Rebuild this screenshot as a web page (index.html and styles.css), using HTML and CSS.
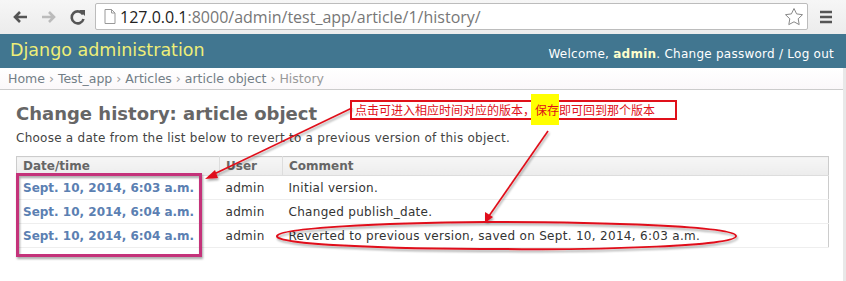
FILE: index.html
```html
<!DOCTYPE html>
<html lang="en">

<head>
  <meta charset="UTF-8" />
  <title>Change history: article object</title>
  <link rel="stylesheet" href="styles.css">
</head>

<body>
  <!-- 浏览器工具栏 -->
  <div class="browser-bar">
    <div class="nav-btns">
      <svg width="18" height="16" viewBox="0 0 18 16"><path d="M16 8H4M9 3L4 8l5 5" fill="none" stroke="#555" stroke-width="2.6" /></svg>
      <svg width="18" height="16" viewBox="0 0 18 16"><path d="M2 8h12M9 3l5 5-5 5" fill="none" stroke="#bbb" stroke-width="2.6" /></svg>
      <svg width="18" height="18" viewBox="0 0 18 18"><path d="M14 6.5A6 6 0 1 0 14.5 11" fill="none" stroke="#555" stroke-width="2.6" /><path d="M10 2h6v6z" fill="#555" /></svg>
    </div>
    <div class="omnibox">
      <svg width="12" height="15" viewBox="0 0 12 15"><path d="M1 .5h6.5l3.5 3.5v10.5H1z M7.5 .5V4h3.5" fill="#fff" stroke="#999" /></svg>
      <span class="host">127.0.0.1</span><span class="path">:8000/admin/test_app/article/1/history/</span>
      <svg class="star" width="20" height="20" viewBox="0 0 20 20"><path d="M10 1.5l2.6 5.4 5.9.8-4.3 4.1 1 5.8-5.2-2.8-5.2 2.8 1-5.8-4.3-4.1 5.9-.8z" fill="none" stroke="#888" /></svg>
    </div>
    <svg class="menu" width="12" height="14" viewBox="0 0 12 14"><path d="M0 2h12M0 7h12M0 12h12" stroke="#555" stroke-width="2.4" /></svg>
  </div>

  <div id="header">
    <h1 class="branding">Django administration</h1>
    <div class="user-tools">Welcome, <strong>admin</strong>. <a href="#">Change password</a> / <a href="#">Log out</a></div>
  </div>

  <div class="page">
    <div class="breadcrumbs">
      <a href="#">Home</a> › <a href="#">Test_app</a> › <a href="#">Articles</a> › <a href="#">article object</a> › History
    </div>

    <div id="content">
      <h1>Change history: article object</h1>
      <p>Choose a date from the list below to revert to a previous version of this object.</p>
      <table class="history">
        <thead>
          <tr>
            <th class="col-date">Date/time</th>
            <th class="col-user">User</th>
            <th>Comment</th>
          </tr>
        </thead>
        <tbody>
          <tr>
            <th><a href="#">Sept. 10, 2014, 6:03 a.m.</a></th>
            <td>admin</td>
            <td>Initial version.</td>
          </tr>
          <tr>
            <th><a href="#">Sept. 10, 2014, 6:04 a.m.</a></th>
            <td>admin</td>
            <td>Changed publish_date.</td>
          </tr>
          <tr>
            <th><a href="#">Sept. 10, 2014, 6:04 a.m.</a></th>
            <td>admin</td>
            <td>Reverted to previous version, saved on Sept. 10, 2014, 6:03 a.m.</td>
          </tr>
        </tbody>
      </table>
    </div>
  </div>

  <!-- 截图上的标注 -->
  <svg class="marks" width="846" height="281" viewBox="0 0 846 281">
    <defs>
      <filter id="shadow" x="-10%" y="-10%" width="120%" height="130%">
        <feDropShadow dx="1" dy="2" stdDeviation="1.2" flood-color="#000" flood-opacity="0.35" />
      </filter>
    </defs>
    <rect x="17.5" y="174.5" width="183" height="81" fill="none" stroke="#c4307a" stroke-width="3" filter="url(#shadow)" />
    <g stroke="#e0101a" stroke-width="1.6" fill="#e0101a" filter="url(#shadow)">
      <line x1="352" y1="108" x2="212" y2="175" />
      <polygon points="205,179 215,170 218,178" stroke="none" />
      <line x1="548" y1="131" x2="489" y2="216" />
      <polygon points="485,223 485,212 493,217" stroke="none" />
      <path d="M486 222 C 600 222, 735 226, 736 236 C 737 246, 600 250, 505 249 C 380 249, 275 244, 277 236 C 279 228, 380 223, 486 222 Z" fill="none" stroke-width="2" />
    </g>
  </svg>
  <div class="note">点击可进入相应时间对应的版本，<mark>保存</mark>即可回到那个版本</div>
</body>

</html>
```

FILE: styles.css
```css
body {
  margin: 0;
  width: 846px;
  height: 281px;
  overflow: hidden;
  position: relative;
  background: #fff;
  color: #333;
  font-family: "DejaVu Sans", Verdana, sans-serif;
  font-size: 12px;
}

a {
  text-decoration: none;
}

/* 浏览器工具栏 */
.browser-bar {
  height: 34px;
  display: flex;
  align-items: center;
  background: linear-gradient(#f6f6f6, #ececec);
  box-sizing: border-box;
  padding-bottom: 1px;
}

.nav-btns {
  display: flex;
  align-items: center;
  gap: 11px;
  padding-left: 11px;
  width: 84px;
}

.omnibox {
  width: 713px;
  height: 27px;
  box-sizing: border-box;
  display: flex;
  align-items: center;
  background: #fff;
  border: 1px solid #bcbcbc;
  border-radius: 2px;
  padding-left: 8px;
  font-family: "Open Sans", "Liberation Sans", sans-serif;
  font-size: 16px;
}

.omnibox .host {
  margin-left: 4px;
  color: #222;
}

.omnibox .path {
  color: #777;
}

.omnibox .star {
  margin-left: auto;
  margin-right: 3px;
}

.menu {
  margin-left: 12px;
}

/* 页面头部 */
#header {
  height: 34px;
  display: flex;
  align-items: center;
  justify-content: space-between;
  background: #417690;
  color: #fff;
  padding: 0 12px 0 10px;
}

.branding {
  margin: 0 0 2px;
  font-size: 17.5px;
  font-weight: normal;
  color: #eeee78;
}

.user-tools {
  font-size: 12px;
  letter-spacing: 0.25px;
  padding-top: 6px;
}

.user-tools strong {
  color: #ffc;
}

.user-tools a {
  color: #fff;
}

/* 页面主体 */
.page {
  border-right: 3px solid #e8e8e8;
  height: 213px;
}

.breadcrumbs {
  height: 22px;
  box-sizing: border-box;
  padding: 3px 8px 0;
  font-size: 12.5px;
  color: #999;
  background: linear-gradient(#fff, #fbf8fa);
  border-bottom: 1px solid #ccc;
}

.breadcrumbs a {
  color: #727e86;
}

#content {
  padding: 13px 14px 0 16px;
}

#content h1 {
  margin: 0 0 7px;
  font-size: 18px;
  color: #666;
}

#content p {
  margin: 0 0 11px;
  color: #444;
  letter-spacing: 0.25px;
}

.history {
  width: 100%;
  border-collapse: collapse;
  border: 1px solid #ccc;
  font-size: 12px;
}

.history thead th {
  height: 18px;
  padding: 0 6px;
  text-align: left;
  color: #666;
  background: linear-gradient(#f6f6f6, #ececec);
  border-bottom: 1px solid #ddd;
  border-left: 1px solid #ddd;
}

.history thead th:first-child {
  border-left: none;
}

.history .col-date {
  width: 190px;
}

.history .col-user {
  width: 50px;
}

.history tbody th,
.history td {
  height: 23px;
  padding: 0 6px;
  text-align: left;
  border-bottom: 1px solid #eee;
}

.history td {
  letter-spacing: 0.3px;
}

.history tbody th a {
  color: #5b80b2;
}

/* 标注 */
.marks {
  position: absolute;
  left: 0;
  top: 0;
  pointer-events: none;
}

.note {
  position: absolute;
  left: 350px;
  top: 100px;
  width: 327px;
  height: 20px;
  box-sizing: border-box;
  border: 2px solid #e0101a;
  padding-left: 3px;
  line-height: 16px;
  color: #e0101a;
  font-family: "Noto Sans CJK SC", sans-serif;
  font-size: 12px;
}

.note mark {
  background: #ffff00;
  color: #e0101a;
  padding: 7px 0 7px 4px;
  margin-left: -4px;
}
```
